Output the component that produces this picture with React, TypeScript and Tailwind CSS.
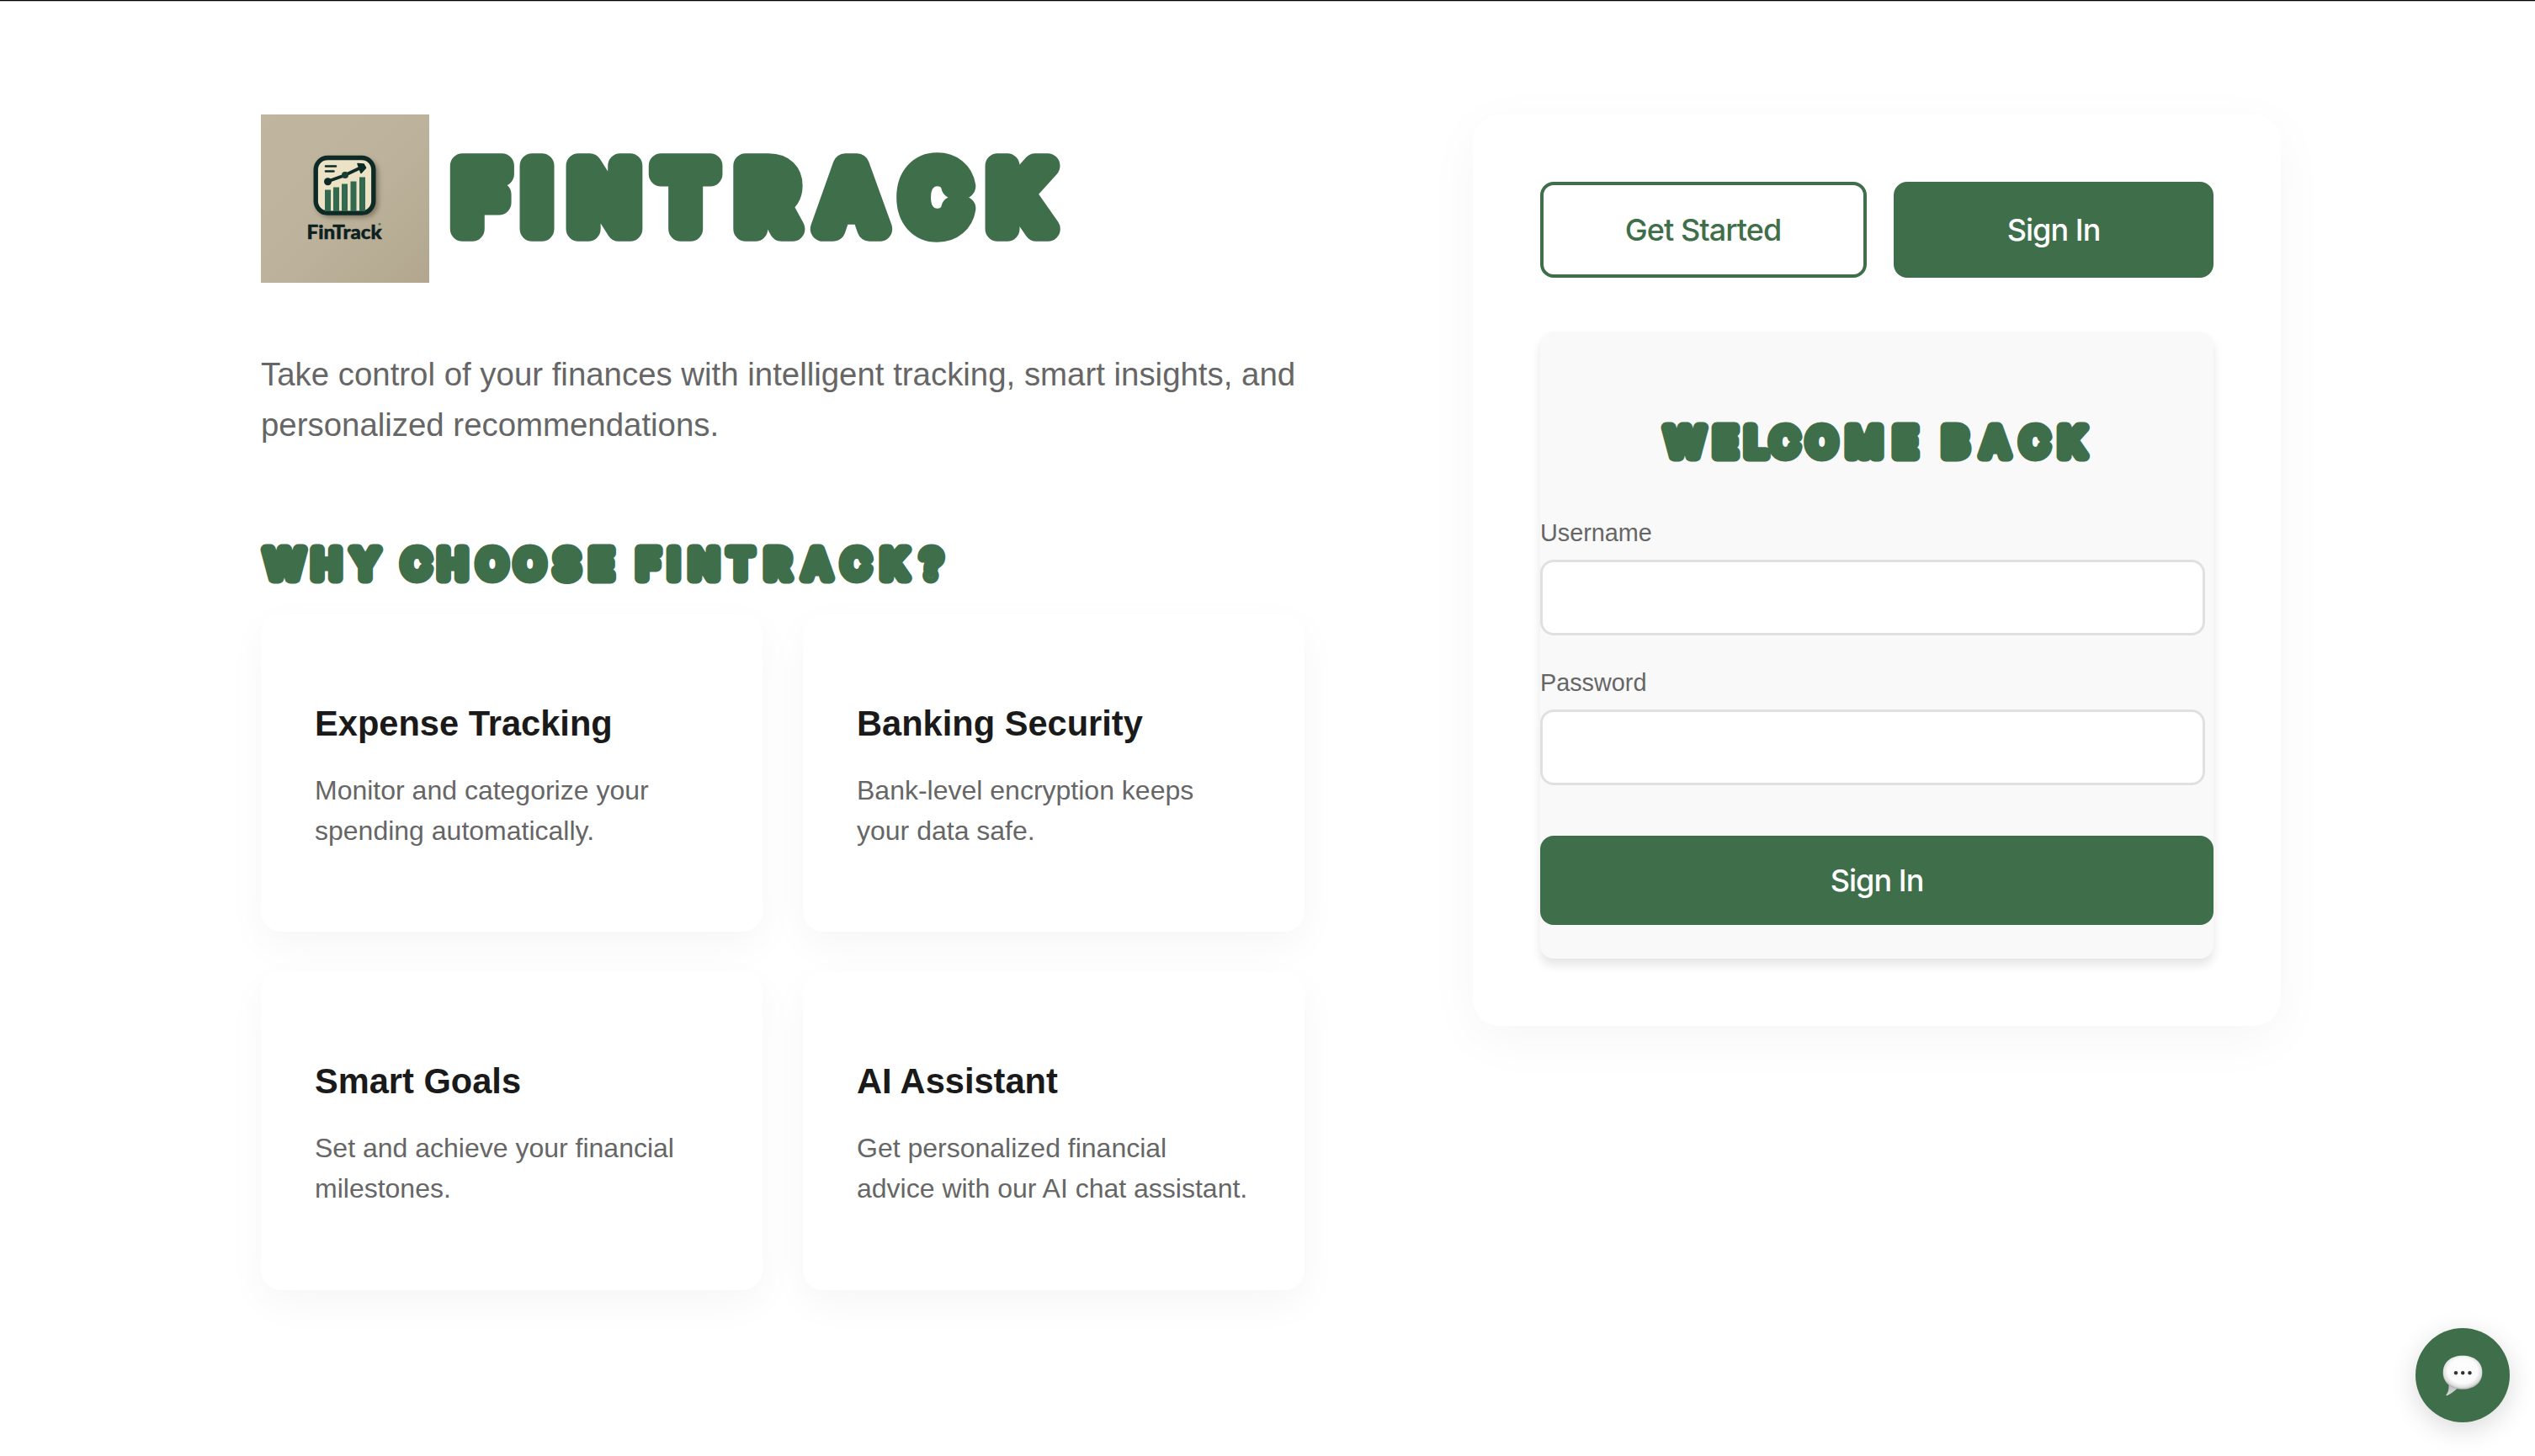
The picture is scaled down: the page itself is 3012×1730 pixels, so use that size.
const GREEN = '#3f6e4b';

type DisplayProps = {
  text: string;
  xs: number[];
  viewBox: string;
  width: number;
  height: number;
  baseline: number;
  size: number;
  stroke: number;
};

/* Rounded, heavy display lettering; every glyph is centred on its own x. */
function DisplayText({ text, xs, viewBox, width, height, baseline, size, stroke }: DisplayProps) {
  return (
    <svg width={width} height={height} viewBox={viewBox} className="block overflow-visible">
      <text
        x={xs.join(' ')}
        y={baseline}
        textAnchor="middle"
        fontFamily="Inter, sans-serif"
        fontWeight={500}
        fontSize={size}
        fill={GREEN}
        stroke={GREEN}
        strokeWidth={stroke}
        strokeLinejoin="round"
      >
        {text}
      </text>
    </svg>
  );
}

function Logo() {
  return (
    <svg width="200" height="200" viewBox="0 0 200 200" className="block shrink-0">
      <defs>
        <linearGradient id="paper" x1="0" y1="0" x2="1" y2="1">
          <stop offset="0" stopColor="#c0b69f" />
          <stop offset="0.5" stopColor="#bdb39c" />
          <stop offset="1" stopColor="#b2a78e" />
        </linearGradient>
        <filter id="soft" x="-30%" y="-30%" width="160%" height="160%">
          <feGaussianBlur stdDeviation="3" />
        </filter>
      </defs>
      <rect width="200" height="200" fill="url(#paper)" />
      <rect x="66" y="53" width="73" height="69" rx="16" fill="#5f5743" opacity="0.7" filter="url(#soft)" />
      <rect x="65.2" y="51.5" width="68.6" height="65.6" rx="14" fill="#ece2c6" stroke="#0d2a26" strokeWidth="5.4" />
      <path d="M77 61.5h12M77 67.5h9.5" stroke="#0d2a26" strokeWidth="2.6" strokeLinecap="round" />
      <g fill="#336a4f">
        <rect x="76" y="89.5" width="7" height="25.5" />
        <rect x="86" y="86.5" width="7" height="28.5" />
        <rect x="96" y="82.5" width="7" height="32.5" />
        <rect x="106.5" y="79.5" width="7" height="35.5" />
        <rect x="117" y="74.5" width="7" height="40.5" />
      </g>
      <path d="M79.5 79.5 99 72.5 119 63" fill="none" stroke="#0d2a26" strokeWidth="3.6" />
      <circle cx="79.5" cy="79.7" r="4.5" fill="#0d2a26" />
      <circle cx="100" cy="72" r="4" fill="#173f33" />
      <path d="M115 58.5 122 59 124.5 63.5 119 69.5Z" fill="#0d2a26" stroke="#0d2a26" strokeWidth="1.6" strokeLinejoin="round" />
      <text
        x="54.6"
        y="148"
        fontFamily="Lato, sans-serif"
        fontWeight={900}
        fontSize="23.5"
        textLength="89"
        lengthAdjust="spacingAndGlyphs"
        fill="#0d211f"
        stroke="#0d211f"
        strokeWidth="0.5"
      >
        FinTrack
      </text>
      <circle cx="141" cy="130.2" r="1.5" fill="#4f7a60" />
    </svg>
  );
}

function FeatureCard({ title, lines }: { title: string; lines: string[] }) {
  return (
    <div className="h-[377.4px] rounded-[24px] bg-white px-16 pt-[106px] shadow-[0_16px_48px_rgba(0,0,0,0.04)]">
      <h3 className="text-[41.6px] leading-[48px] font-bold whitespace-nowrap text-[#1a1a1a]">{title}</h3>
      <p className="mt-[30.7px] text-[32px] leading-[48px] whitespace-nowrap text-[#666666]">
        {lines[0]}
        <br />
        {lines[1]}
      </p>
    </div>
  );
}

function Field({ label, type }: { label: string; type: string }) {
  return (
    <label className="block h-[178px]">
      <span className="block h-[48.5px] text-[28.8px] leading-[32px] text-[#666666]">{label}</span>
      <input type={type} className="block h-[90px] w-[790px] rounded-[16px] border-[3px] border-[#e0e0e0] bg-white" />
    </label>
  );
}

function ChatBubble() {
  return (
    <svg width="56" height="56" viewBox="0 0 56 56" className="block">
      <defs>
        <radialGradient id="bubble" cx="0.5" cy="0.45" r="0.56">
          <stop offset="0" stopColor="#ffffff" />
          <stop offset="0.68" stopColor="#fbfbfb" />
          <stop offset="0.88" stopColor="#dedede" />
          <stop offset="1" stopColor="#a4a4a4" />
        </radialGradient>
        <linearGradient id="tail" x1="0" y1="0" x2="0" y2="1">
          <stop offset="0" stopColor="#bdbdbd" />
          <stop offset="1" stopColor="#d8d8d8" />
        </linearGradient>
      </defs>
      <path d="M11.5 39C12 44 11 48 8.5 51.2 8.2 52.2 9 52.4 10 52 15 49.5 19 46.5 23 42.5Z" fill="url(#tail)" />
      <path d="M28 4.8C42 4.8 51.3 12.5 51.3 24.8S42 44.8 28 44.8 4.7 37 4.7 24.8 14 4.8 28 4.8Z" fill="url(#bubble)" />
      <g fill="#333333">
        <circle cx="20" cy="25.3" r="2.2" />
        <circle cx="28.2" cy="25.3" r="2.2" />
        <circle cx="36.5" cy="25.3" r="2.2" />
      </g>
    </svg>
  );
}

export default function App() {
  return (
    <div className="relative h-[1730px] w-[3012px] overflow-hidden border-t border-black bg-white font-['Liberation_Sans',Arial,sans-serif]">
      <div className="h-px bg-[#bdbdbd]" />
      <main className="flex items-start pt-[134px] pl-[310px]">
        <section className="w-[1240px]">
          <div className="flex">
            <Logo />
            <h1 className="pt-[46px] pl-[24px]">
              <DisplayText
                text="FINTRACK"
                xs={[571.5, 638, 718, 814.5, 911, 1011.5, 1112, 1212.5]}
                viewBox="534 182 728 105"
                width={728}
                height={105}
                baseline={272.3}
                size={103}
                stroke={29.5}
              />
            </h1>
          </div>
          <p className="mt-[78.7px] text-[38.4px] leading-[60px] whitespace-nowrap text-[#666666]">
            Take control of your finances with intelligent tracking, smart insights, and
            <br />
            personalized recommendations.
          </p>
          <h2 className="mt-[112.3px]">
            <DisplayText
              text="WHY CHOOSE FINTRACK?"
              xs={[
                337.8, 388, 434, 464, 494.5, 538, 585, 629.6, 673.7, 714.5, 742, 770.4, 800.6, 836.5, 880, 923.9, 970.8,
                1017, 1062.7, 1107,
              ]}
              viewBox="310 647 820 47"
              width={820}
              height={47}
              baseline={687.2}
              size={46}
              stroke={12.8}
            />
          </h2>
          <div className="mt-[36px] grid grid-cols-2 gap-12">
            <FeatureCard title="Expense Tracking" lines={['Monitor and categorize your', 'spending automatically.']} />
            <FeatureCard title="Banking Security" lines={['Bank-level encryption keeps', 'your data safe.']} />
            <FeatureCard title="Smart Goals" lines={['Set and achieve your financial', 'milestones.']} />
            <FeatureCard title="AI Assistant" lines={['Get personalized financial', 'advice with our AI chat assistant.']} />
          </div>
        </section>

        <section className="ml-[200px] h-[1083px] w-[960px] rounded-[32px] bg-white p-20 shadow-[0_16px_64px_rgba(0,0,0,0.04)]">
          <div className="flex gap-8 font-[Inter,sans-serif] text-[36px] font-medium">
            <button className="h-[114px] w-[388px] rounded-[16px] border-4 border-[#3f6e4b] bg-white pr-[1px] tracking-[-0.95px] text-[#3f6e4b]">
              Get Started
            </button>
            <button className="h-[114px] w-[380px] rounded-[16px] bg-[#3f6e4b] tracking-[-0.95px] text-white">Sign In</button>
          </div>
          <form className="mt-[64px] h-[745px] rounded-[16px] bg-[#f9f9f9] pt-[108px] shadow-[0_8px_12px_rgba(0,0,0,0.1)]">
            <h2 className="flex justify-center">
              <DisplayText
                text="WELCOME BACK"
                xs={[2001.7, 2050, 2086.5, 2120.6, 2164.6, 2215, 2263.8, 2295, 2323.4, 2370.6, 2417.5, 2462]}
                viewBox="1974 502 512 47"
                width={512}
                height={47}
                baseline={542.2}
                size={46}
                stroke={12.8}
              />
            </h2>
            <div className="mt-[67.5px]">
              <Field label="Username" type="text" />
              <Field label="Password" type="password" />
            </div>
            <button
              type="button"
              className="mt-[20.5px] h-[106px] w-full rounded-[16px] bg-[#3f6e4b] font-[Inter,sans-serif] text-[36px] font-medium tracking-[-0.95px] text-white"
            >
              Sign In
            </button>
          </form>
        </section>
      </main>

      <button className="absolute right-[30px] bottom-[40px] flex size-[112px] items-center justify-center rounded-full bg-[#3f6e4b] shadow-[0_8px_32px_rgba(0,0,0,0.15)]">
        <ChatBubble />
      </button>
    </div>
  );
}
